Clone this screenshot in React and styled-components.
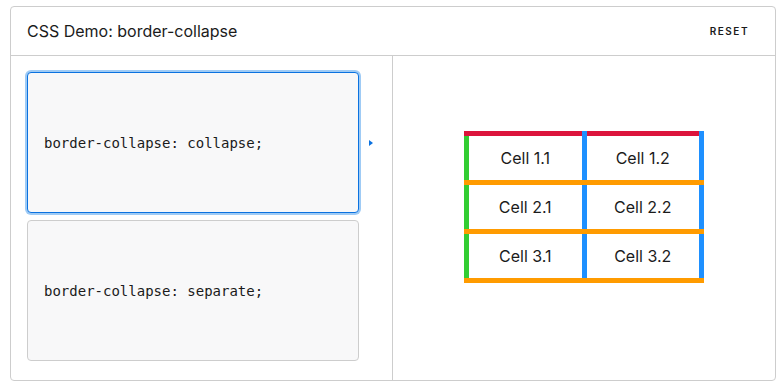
import styled, { createGlobalStyle } from "styled-components";

const GlobalStyle = createGlobalStyle`
  body {
    margin: 0;
    background: #ffffff;
    font-family: Inter, "Noto Sans", sans-serif;
    color: #1b1b1b;
  }
`;

const choices = [
  { code: "border-collapse: collapse;", selected: true },
  { code: "border-collapse: separate;", selected: false },
];

const rows = [
  ["Cell 1.1", "Cell 1.2"],
  ["Cell 2.1", "Cell 2.2"],
  ["Cell 3.1", "Cell 3.2"],
];

const App = () => {
  return (
    <>
      <GlobalStyle />
      <Frame>
        <Header>
          <Title>CSS Demo: border-collapse</Title>
          <ResetButton>Reset</ResetButton>
        </Header>
        <Body>
          <ChoiceList>
            {choices.map((c) => (
              <Choice key={c.code} $selected={c.selected}>
                <Code>{c.code}</Code>
                {c.selected && <Marker />}
              </Choice>
            ))}
          </ChoiceList>
          <Output>
            <DemoTable>
              <tbody>
                {rows.map((row) => (
                  <tr key={row[0]}>
                    {row.map((cell) => (
                      <Cell key={cell}>{cell}</Cell>
                    ))}
                  </tr>
                ))}
              </tbody>
            </DemoTable>
          </Output>
        </Body>
      </Frame>
    </>
  );
};

export default App;

const Frame = styled.div`
  margin: 6px 0 0 10px;
  width: 766px;
  height: 375px;
  box-sizing: border-box;
  border: 1px solid #cdcdcd;
  border-radius: 4px;
  display: flex;
  flex-direction: column;
  overflow: hidden;
`;

const Header = styled.div`
  height: 48px;
  flex-shrink: 0;
  display: flex;
  align-items: center;
  justify-content: space-between;
  padding: 0 26px 0 16px;
  border-bottom: 1px solid #cdcdcd;
`;

const Title = styled.h2`
  margin: 0;
  font-size: 16px;
  font-weight: 400;
  color: #1b1b1b;
`;

const ResetButton = styled.button`
  border: none;
  background: none;
  padding: 0;
  font-family: Inter, "Noto Sans", sans-serif;
  font-size: 10px;
  font-weight: 600;
  letter-spacing: 1.5px;
  text-transform: uppercase;
  color: #1b1b1b;
  cursor: pointer;
`;

const Body = styled.div`
  flex: 1;
  display: flex;
  min-height: 0;
`;

const ChoiceList = styled.div`
  width: 382px;
  flex-shrink: 0;
  box-sizing: border-box;
  border-right: 1px solid #cdcdcd;
  padding: 16px 33px 19px 16px;
  display: flex;
  flex-direction: column;
  gap: 7px;
`;

const Choice = styled.div`
  position: relative;
  flex: 1;
  display: flex;
  align-items: center;
  padding-left: 16px;
  background: #f8f8f9;
  border: 1px solid ${(p) => (p.$selected ? "#0b72e0" : "#cdcdcd")};
  border-radius: 4px;
  box-shadow: ${(p) => (p.$selected ? "0 0 0 2px #9fcbf5" : "none")};
  cursor: pointer;
`;

const Code = styled.code`
  font-family: "DejaVu Sans Mono", "Liberation Mono", monospace;
  font-size: 14px;
  color: #1b1b1b;
`;

const Marker = styled.span`
  position: absolute;
  left: calc(100% + 11px);
  top: 50%;
  transform: translateY(-50%);
  width: 0;
  height: 0;
  border-top: 3.5px solid transparent;
  border-bottom: 3.5px solid transparent;
  border-left: 4px solid #0b72e0;
`;

const Output = styled.div`
  flex: 1;
  display: flex;
  align-items: center;
  justify-content: center;
  padding-bottom: 23px;
`;

const DemoTable = styled.table`
  width: 240px;
  table-layout: fixed;
  border-collapse: collapse;
`;

const Cell = styled.td`
  border: 5px solid;
  border-color: crimson dodgerblue #ff9b00 limegreen;
  padding: 12px;
  text-align: center;
  font-family: Inter, "Noto Sans", sans-serif;
  font-size: 16px;
  color: #1b1b1b;
`;
